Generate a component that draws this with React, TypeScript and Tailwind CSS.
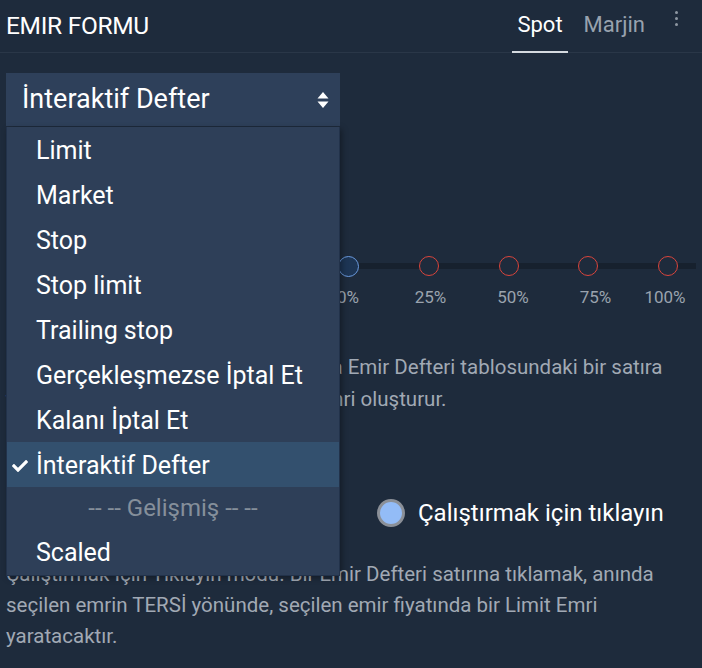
import React from "react";
import { FaCheck } from "react-icons/fa";

const items = [
  "Limit",
  "Market",
  "Stop",
  "Stop limit",
  "Trailing stop",
  "Gerçekleşmezse İptal Et",
  "Kalanı İptal Et",
];

export default function App() {
  const marks = ["0%", "25%", "50%", "75%", "100%"];
  const markLeft = [10, 92.5, 175, 257.5, 327];
  return (
    <div className="relative w-[702px] h-[668px] overflow-hidden bg-[#1e2b3c] font-['Roboto',sans-serif] text-white">
      {/* header */}
      <div className="flex h-[53px] items-center border-b border-[#2a3748] pl-[6px] pr-[24px]">
        <div className="text-[24.5px] tracking-[-0.3px] text-white">EMIR FORMU</div>
        <div className="ml-auto flex h-full items-center">
          <div className="relative flex h-full items-center px-[5px] pb-[4px] text-[22px] text-white">
            Spot
            <div className="absolute bottom-[-1px] left-0 right-0 h-[2px] bg-[#d5dae0]" />
          </div>
          <div className="ml-[16px] pb-[4px] text-[22px] text-[#98a2ae]">Marjin</div>
          <div className="ml-[30px] mb-[16px] flex flex-col gap-[3px]">
            <div className="h-[3px] w-[3px] rounded-full bg-[#8e97a2]" />
            <div className="h-[3px] w-[3px] rounded-full bg-[#8e97a2]" />
            <div className="h-[3px] w-[3px] rounded-full bg-[#8e97a2]" />
          </div>
        </div>
      </div>

      {/* body */}
      <div className="px-[6px] pt-[20px]">
        <div className="flex h-[53px] w-[334px] items-center justify-between bg-[#2e405a] pl-[16px] pr-[11px] text-[27px]">
          <span>İnteraktif Defter</span>
          <svg width="12" height="18" viewBox="0 0 12 18">
            <path d="M6 1 L11.5 7.5 L0.5 7.5 Z" fill="#ffffff" />
            <path d="M6 17 L11.5 10.5 L0.5 10.5 Z" fill="#ffffff" />
          </svg>
        </div>

        {/* hidden inputs behind menu */}
        <div className="h-[120px]" />

        {/* slider */}
        <div className="flex">
          <div className="w-[332px]" />
          <div className="relative h-[40px] flex-1">
            <div className="absolute left-[10px] right-[0px] top-[17px] h-[6px] bg-[#17212e]" />
            <div className="absolute left-0 top-[10px] flex w-[340px] justify-between">
              <div className="h-[21px] w-[21px] rounded-full border border-[#6b9be0] bg-[#1d3554]" />
              <div className="h-[20px] w-[20px] rounded-full border-[1.5px] border-[#d9453c] bg-[#1e2b3c]" />
              <div className="h-[20px] w-[20px] rounded-full border-[1.5px] border-[#d9453c] bg-[#1e2b3c]" />
              <div className="h-[20px] w-[20px] rounded-full border-[1.5px] border-[#d9453c] bg-[#1e2b3c]" />
              <div className="h-[20px] w-[20px] rounded-full border-[1.5px] border-[#d9453c] bg-[#1e2b3c]" />
            </div>
          </div>
        </div>
        <div className="flex">
          <div className="w-[332px]" />
          <div className="relative h-[30px] flex-1">
            {marks.map((m, i) => (
              <div
                key={m}
                className="absolute top-[-1px] w-[60px] -translate-x-1/2 text-center text-[17px] text-[#9aa3ae]"
                style={{ left: markLeft[i] }}
              >
                {m}
              </div>
            ))}
          </div>
        </div>

        <div className="mt-[35px] whitespace-nowrap text-[20.5px] leading-[32px] text-[#a1a9b4]">
          İnteraktif Defter modu kullanıldığında Emir Defteri tablosundaki bir satıra
          <br />
          tıklamak, seçilen fiyattan bir Limit emri oluşturur.
        </div>

        <div className="mt-[80px] flex items-center">
          <div className="w-[371px]" />
          <div className="h-[28px] w-[28px] rounded-full border-[3px] border-[#8b9098] bg-[#93bcf7]" />
          <div className="ml-[13px] text-[24px] text-white">Çalıştırmak için tıklayın</div>
        </div>

        <div className="mt-[28px] text-[20.5px] leading-[31px] text-[#a1a9b4]">
          Çalıştırmak İçin Tıklayın modu. Bir Emir Defteri satırına tıklamak, anında
          <br />
          seçilen emrin TERSİ yönünde, seçilen emir fiyatında bir Limit Emri
          <br />
          yaratacaktır.
        </div>
      </div>

      {/* dropdown menu */}
      <div className="absolute left-[6px] top-[127px] w-[334px] border-x border-b border-[#22324a] bg-[#2e3f58] shadow-[2px_2px_6px_rgba(0,0,0,0.35)]">
        {items.map((t) => (
          <div key={t} className="flex h-[45px] items-center pl-[29px] pt-[2px] text-[25px] text-white">
            {t}
          </div>
        ))}
        <div className="relative flex h-[45px] items-center bg-[#33506e] pl-[29px] pt-[2px] text-[25px] text-white">
          <FaCheck className="absolute left-[5px] top-[16px] text-white" size={16} />
          İnteraktif Defter
        </div>
        <div className="flex h-[42px] items-center justify-center text-[24px] text-[#858f9b]">
          -- -- Gelişmiş -- --
        </div>
        <div className="flex h-[46px] items-center pl-[29px] pt-[2px] text-[25px] text-white">Scaled</div>
      </div>
    </div>
  );
}
